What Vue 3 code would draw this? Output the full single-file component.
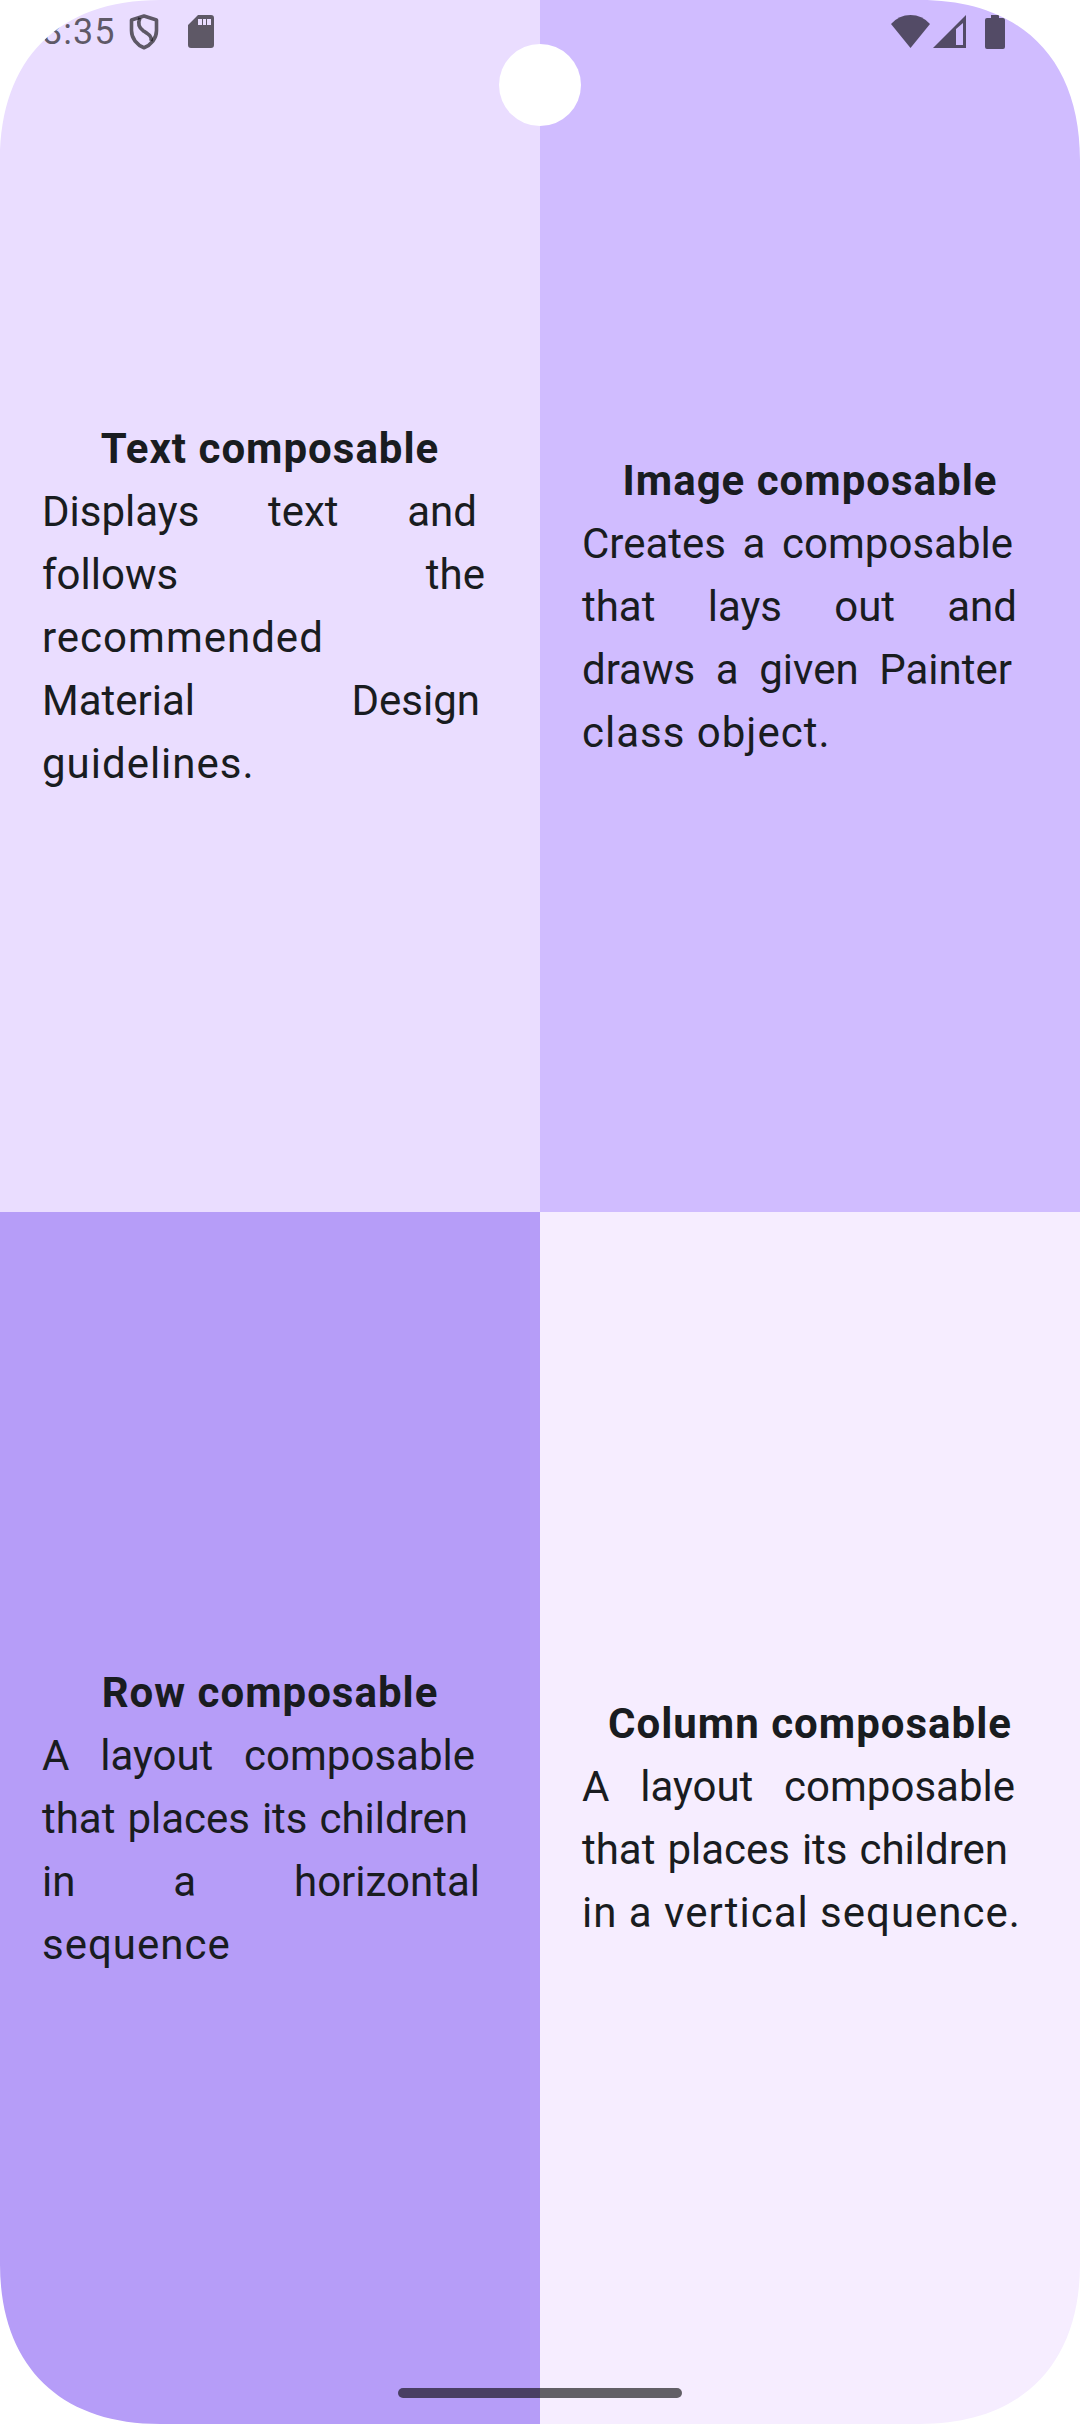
<script setup>
const TRACKING = 1.25

const quadrants = [
  {
    id: 'text',
    title: 'Text composable',
    lines: ['Displays text and', 'follows the', 'recommended', 'Material Design', 'guidelines.'],
  },
  {
    id: 'image',
    title: 'Image composable',
    lines: ['Creates a composable', 'that lays out and', 'draws a given Painter', 'class object.'],
  },
  {
    id: 'row',
    title: 'Row composable',
    lines: ['A layout composable', 'that places its children', 'in a horizontal', 'sequence'],
  },
  {
    id: 'column',
    title: 'Column composable',
    lines: ['A layout composable', 'that places its children', 'in a vertical sequence.'],
  },
]

const corners = ['top-left', 'top-right', 'bottom-right', 'bottom-left']

// Full lines are justified; the last line and single words stay ragged.
function isJustified(lines, index) {
  return index < lines.length - 1 && lines[index].includes(' ')
}

function lineStyle(lines, index) {
  if (!isJustified(lines, index)) return null
  return { paddingRight: Math.floor(lines[index].length * TRACKING) + 'px' }
}
</script>

<template>
  <div class="screen">
    <main class="quadrants">
      <section v-for="q in quadrants" :key="q.id" class="card" :class="q.id">
        <h2 class="title">{{ q.title }}</h2>
        <p class="body">
          <span
            v-for="(line, i) in q.lines"
            :key="i"
            class="line"
            :class="{ justified: isJustified(q.lines, i) }"
            :style="lineStyle(q.lines, i)"
          >{{ line + ' ' }}</span>
        </p>
      </section>
    </main>

    <header class="status">
      <div class="group">
        <span class="time">8:35</span>
        <svg class="shield" width="30" height="36" viewBox="0 0 30 36" fill="none" stroke="currentColor" stroke-width="3.6" stroke-linejoin="round" aria-hidden="true">
          <path d="M15 2 27.500 6V16.500C27.500 24.500 22 31 15 33.700 8 31 2.500 24.500 2.500 16.500V6Z" />
          <path d="M11 4C8.500 9.500 9.500 13.500 14.500 17 20.500 21 23 22.500 22 27" />
        </svg>
        <svg width="26" height="34" viewBox="0 0 26 34" fill="currentColor" aria-hidden="true">
          <path fill-rule="evenodd" d="M10 0H23Q26 0 26 3V30Q26 33 23 33H3Q0 33 0 30V10ZM10 4V10H14V4ZM15 4V10H18V4ZM19 4V10H23V4Z" />
        </svg>
      </div>
      <div class="group end">
        <svg width="40" height="34" viewBox="0 0 40 34" fill="currentColor" aria-hidden="true">
          <path d="M0 9Q8 0 19.500 0T39 9L19.500 33Z" />
        </svg>
        <svg class="signal" width="34" height="34" viewBox="0 0 34 34" fill="currentColor" aria-hidden="true">
          <path fill-rule="evenodd" d="M0 33 33 0V33ZM23 14V30H30V8Z" />
        </svg>
        <svg width="20" height="34" viewBox="0 0 20 34" fill="currentColor" aria-hidden="true">
          <path d="M6 0H14V3H18Q20 3 20 5V32Q20 34 18 34H2Q0 34 0 32V5Q0 3 2 3H6Z" />
        </svg>
      </div>
    </header>

    <div class="camera"></div>
    <div class="home-bar"></div>
    <svg v-for="c in corners" :key="c" class="corner" :class="c" viewBox="0 0 160 160" aria-hidden="true">
      <path d="M0 0V160C0 59 59 0 160 0Z" fill="#fff" />
    </svg>
  </div>
</template>

<style>
body {
  margin: 0;
  background: #fff;
}
</style>

<style scoped>
.screen {
  position: relative;
  display: flex;
  min-height: 100vh;
  overflow: hidden;
  font-family: Roboto, sans-serif;
  color: #191c20;
}

.quadrants {
  flex: 1;
  display: grid;
  grid-template-columns: 1fr 1fr;
  grid-template-rows: 1fr 1fr;
}

.card {
  display: flex;
  flex-direction: column;
  justify-content: center;
  padding: 42px;
  font-size: 42px;
  line-height: 63px;
}

.text { background: #eaddff; }
.image { background: #d0bcff; }
.row { background: #b69df8; }
.column { background: #f6edff; }

.title {
  margin: 0;
  font-size: 42px;
  font-weight: 700;
  letter-spacing: 1px;
  text-align: center;
}

.body {
  margin: 0;
}

.line {
  display: block;
  letter-spacing: 1px;
  white-space: nowrap;
}

.justified {
  letter-spacing: normal;
  white-space: normal;
  text-align-last: justify;
}

.status {
  position: absolute;
  top: 0;
  left: 0;
  right: 0;
  display: flex;
  justify-content: space-between;
  height: 63px;
  padding: 0 75px 0 42px;
  color: rgba(0, 0, 0, 0.6);
}

.group {
  display: flex;
  align-items: center;
}

.time {
  margin-right: 14px;
  font-size: 36px;
  letter-spacing: 1px;
}

.shield {
  margin-right: 29px;
}

.signal {
  margin: 0 18px 0 2px;
}

.camera {
  position: absolute;
  top: 44px;
  left: 50%;
  width: 82px;
  height: 82px;
  border-radius: 50%;
  background: #fff;
  transform: translateX(-50%);
}

.home-bar {
  position: absolute;
  bottom: 26px;
  left: 50%;
  width: 284px;
  height: 10px;
  border-radius: 5px;
  background: rgba(0, 0, 0, 0.6);
  transform: translateX(-50%);
}

.corner {
  position: absolute;
  width: 160px;
  height: 160px;
}

.top-left { top: 0; left: 0; }
.top-right { top: 0; right: 0; transform: rotate(90deg); }
.bottom-right { bottom: 0; right: 0; transform: rotate(180deg); }
.bottom-left { bottom: 0; left: 0; transform: rotate(270deg); }
</style>
